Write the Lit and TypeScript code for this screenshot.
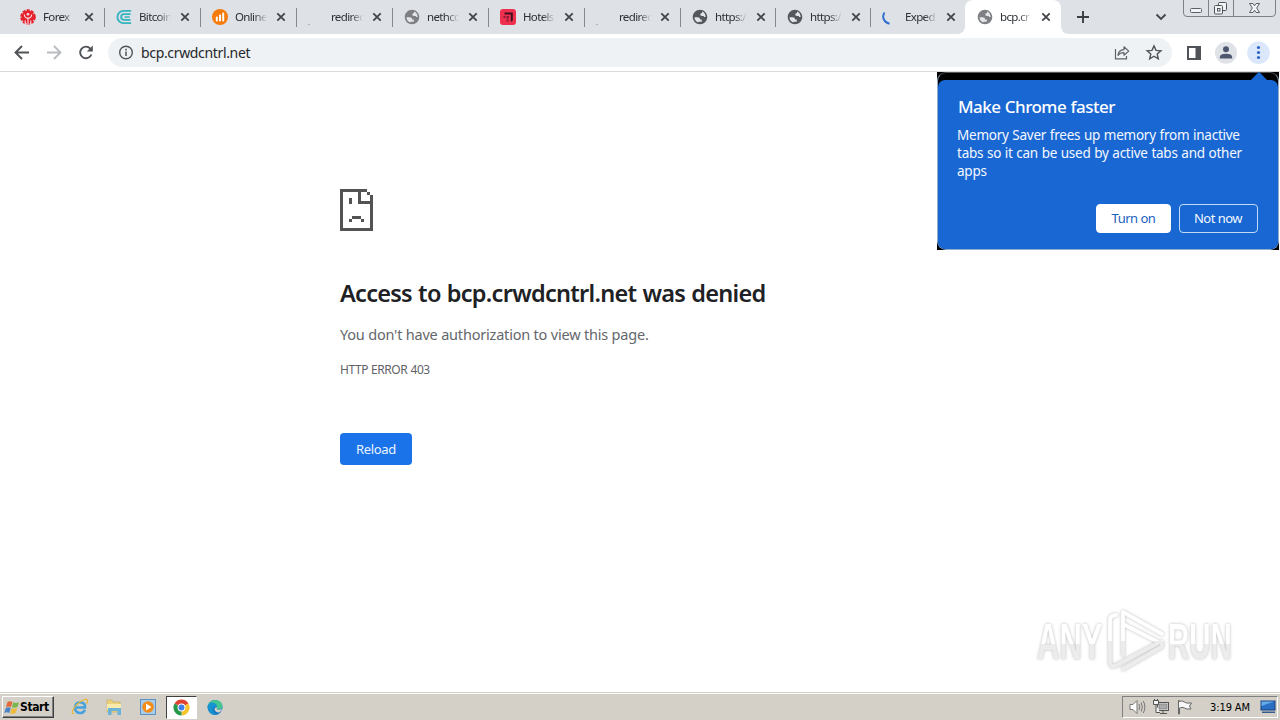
import { LitElement, html, css, svg, TemplateResult } from "lit";
import { customElement, property } from "lit/decorators.js";
import { classMap } from "lit/directives/class-map.js";

const globe = (color: string) => html`<svg width="16" height="16" viewBox="1 1 22 22">
  <circle cx="12" cy="12" r="9.500" fill="#e3e5e9" />
  <path fill=${color} d="M12 2C6.480 2 2 6.480 2 12s4.480 10 10 10 10-4.480 10-10S17.520 2 12 2zM4.500 12.500H8.500C11 12.500 12 13.500 12 15.500H14.500V18.500H10V19.500C6.500 18.800 4.300 16 4.500 12.500zM14.800 4.600C17.800 5.800 19.800 8.700 19.700 12C18 12.300 17.500 12 17 10.500C14.500 10.800 13 10.500 12.500 9.500C12 7.500 13.500 7 14.800 6.600z" fill-rule="evenodd" />
</svg>`;

const icons: Record<string, () => TemplateResult> = {
  none: () => html`<svg width="16" height="16" viewBox="0 0 16 16"><circle cx="1" cy="15.500" r=".6" fill="#777b82" /></svg>`,
  globe: () => globe("#7d7f83"),
  globeDark: () => globe("#54575c"),
  forex: () => html`<svg width="16" height="16" viewBox="0 0 16 16">
    <circle cx="8" cy="8" r="6.500" fill="#e5232f" stroke="#e5232f" stroke-width="2.600" stroke-dasharray="3 1.080" />
    <path d="M8 16V8.500M4.300 5.500Q4.500 9 8 9.500Q11.500 9 11.700 5.500M5.200 15V11.500M10.800 15V11.500" fill="none" stroke="#f6dfe3" stroke-width="1.100" />
    <circle cx="8" cy="5.300" r="1.300" fill="#f6dfe3" />
  </svg>`,
  bitcoin: () => html`<svg width="17" height="16" viewBox="0 0 17 16">
    <g fill="none" stroke="#33b4bf" stroke-width="2">
      <path d="M16 1.500H8A6.500 6.500 0 0 0 8 14.500H16" />
      <path d="M15.500 5H8.500A3 3 0 0 0 8.500 11H15.500" />
      <path d="M9 8H14.500" stroke-width="1.600" />
    </g>
  </svg>`,
  online: () => html`<svg width="16" height="16" viewBox="0 0 16 16">
    <circle cx="8" cy="8" r="8" fill="#f57c0c" />
    <path d="M4.800 11.500V8.500M8 11.500V6.500M11.200 11.500V4.500" stroke="#fff" stroke-width="2" stroke-linecap="round" />
  </svg>`,
  hotels: () => html`<svg width="16" height="16" viewBox="0 0 16 16">
    <rect width="16" height="16" rx="3" fill="#ee2f4d" />
    <path d="M4.500 3.500H12.800V11.500L10.800 13V5.600H4.500z" fill="#3c1020" />
    <path d="M3.500 7H5.500V9H3.500zM6.500 7H9V9.500H6.500zM6.500 10.500H8.500V12.500H6.500z" fill="#8a1a34" />
  </svg>`,
  spinner: () => html`<svg width="16" height="16" viewBox="0 0 16 16"><path d="M2.500 3.500C-.5 8 2 13.500 7.500 14.800" fill="none" stroke="#2f6fd0" stroke-width="2" /></svg>`,
};

interface Tab { icon: string; title: string; width: number; active?: boolean; line?: boolean; }

const TABS: Tab[] = [
  { icon: "forex", title: "Forex", width: 96, line: true },
  { icon: "bitcoin", title: "Bitcoin", width: 96, line: true },
  { icon: "online", title: "Onlinel", width: 96, line: true },
  { icon: "none", title: "redirec", width: 96, line: true },
  { icon: "globe", title: "nethcd", width: 96, line: true },
  { icon: "hotels", title: "Hotels", width: 96, line: true },
  { icon: "none", title: "redirec", width: 96, line: true },
  { icon: "globeDark", title: "https:/", width: 95, line: true },
  { icon: "globeDark", title: "https:/", width: 95, line: true },
  { icon: "spinner", title: "Exped", width: 95 },
  { icon: "globe", title: "bcp.cr", width: 96, active: true },
];

@customElement("browser-tab")
class BrowserTab extends LitElement {
  @property({ attribute: false }) tab!: Tab;
  static styles = css`
    :host { display: block; flex: none; height: 34px; }
    .tab { position: relative; display: flex; align-items: center; height: 34px; padding-left: 12px; box-sizing: border-box; }
    .active { background: #fff; border-radius: 8px 8px 0 0; }
    .active::before, .active::after { content: ""; position: absolute; bottom: 0; width: 7px; height: 7px; }
    .active::before { left: -7px; background: radial-gradient(circle at 0 0, transparent 6.500px, #fff 7px); }
    .active::after { right: -7px; background: radial-gradient(circle at 100% 0, transparent 6.500px, #fff 7px); }
    .line::after { content: ""; position: absolute; right: -1px; top: 8px; width: 1px; height: 19px; background: #85888d; }
    .icon { width: 16px; height: 16px; display: flex; flex: none; }
    .title { width: 35px; margin-left: 7px; overflow: hidden; white-space: nowrap; flex: none;
      font: 11.500px/16px "Noto Sans", sans-serif; letter-spacing: -0.65px; color: #2c2f34;
      -webkit-mask-image: linear-gradient(90deg, #000 55%, transparent 92%); mask-image: linear-gradient(90deg, #000 55%, transparent 92%); }
    .close { margin-left: 6px; flex: none; }
  `;
  render() {
    const t = this.tab;
    return html`<div class=${classMap({ tab: true, active: !!t.active, line: !!t.line })} style="width:${t.width}px">
      <span class="icon">${icons[t.icon]()}</span>
      <span class="title">${t.title}</span>
      <svg class="close" width="10" height="10" viewBox="0 0 10 10"><path d="M1.300 1.300L8.700 8.700M8.700 1.300L1.300 8.700" stroke="#42454a" stroke-width="1.800" /></svg>
    </div>`;
  }
}

@customElement("tab-strip")
class TabStrip extends LitElement {
  static styles = css`
    :host { display: flex; height: 34px; background: #dee1e6; padding-left: 8px; }
    .plus { margin: 11px 0 0 16px; flex: none; }
    .chev { margin: 13px 16px 0 auto; flex: none; }
    .win { flex: none; margin-right: 3px; }
  `;
  render() {
    return html`${TABS.map((t) => html`<browser-tab .tab=${t}></browser-tab>`)}
      <svg class="plus" width="12" height="12" viewBox="0 0 12 12"><path d="M6 0V12M0 6H12" stroke="#3c4043" stroke-width="1.900" /></svg>
      <svg class="chev" width="12" height="8" viewBox="0 0 12 8"><path d="M1.500 1.500L6 6L10.500 1.500" fill="none" stroke="#45484d" stroke-width="1.900" /></svg>
      <svg class="win" width="94" height="17" viewBox="0 0 94 17">
        <g fill="none" stroke="#7d828a">
          <path d="M.5 0V13Q.5 16.500 4 16.500H89Q92.500 16.500 92.500 13V0M25.500 0V16.500M50.500 0V16.500" />
          <rect x="7.500" y="8.500" width="11" height="4" rx="1" fill="#f2f3f5" stroke="#5d6066" />
          <g stroke="#50545a" fill="#f2f3f5"><rect x="35.500" y="2.500" width="8" height="8" rx="1" /><rect x="31.500" y="5.500" width="8" height="8.500" rx="1" /><rect x="34.500" y="8.500" width="2.500" height="2.500" /></g>
          <path d="M66.500 3.500H70L71.500 5.800L73 3.500H76.500L73.700 8L76.500 12.500H73L71.500 10.200L70 12.500H66.500L69.300 8z" fill="#f2f3f5" stroke="#5d6066" />
        </g>
      </svg>`;
  }
}

@customElement("tool-bar")
class ToolBar extends LitElement {
  static styles = css`
    :host { display: flex; align-items: center; height: 38px; box-sizing: border-box; background: #fff; border-bottom: 1px solid #d9dadc; padding-left: 12px; }
    .nav { flex: none; margin-right: 12px; }
    .box { display: flex; align-items: center; width: 1064px; height: 29px; box-sizing: border-box; border-radius: 14.500px; background: #eff2f5; padding: 0 9px 0 10px; }
    .url { flex: 1; margin-left: 7px; font: 14px/20px "Noto Sans", sans-serif; letter-spacing: -0.34px; color: #26282b; }
    .share { margin-right: 15px; }
    .side { margin-left: 14px; flex: none; }
    .avatar { margin-left: 13px; flex: none; }
    .menu { margin-left: 9px; flex: none; }
  `;
  render() {
    return html`
      <svg class="nav" width="20" height="20" viewBox="0 0 20 20"><path d="M17 9.500H4M10 3L3.500 9.500L10 16" fill="none" stroke="#505357" stroke-width="1.900" /></svg>
      <svg class="nav" width="20" height="20" viewBox="0 0 20 20"><path d="M3 9.500H16M10 3L16.500 9.500L10 16" fill="none" stroke="#b9bbbe" stroke-width="1.800" /></svg>
      <svg class="nav" width="20" height="20" viewBox="0 0 20 20"><path d="M15.400 11.500A5.800 5.800 0 1 1 14.300 5.600L15.800 7.100" fill="none" stroke="#505357" stroke-width="1.900" /><path d="M16.800 2.500V8.500H10.800z" fill="#505357" /></svg>
      <div class="box">
        <svg width="16" height="16" viewBox="0 0 16 16"><circle cx="8" cy="7.500" r="6.300" fill="none" stroke="#505357" stroke-width="1.400" /><path d="M8 6.500V11M8 3.800V5.400" stroke="#505357" stroke-width="1.500" /></svg>
        <span class="url">bcp.crwdcntrl.net</span>
        <svg class="share" width="16" height="16" viewBox="0 0 16 16"><g fill="none" stroke="#5f6368" stroke-width="1.200"><path d="M1.500 4V13.900H12.500V11" /><path d="M4 10.300Q4.500 5 10 4.700V1.800L14.700 6.100L10 10.200V7.600Q6 7.500 4 10.300z" stroke-linejoin="round" /></g></svg>
        <svg width="18" height="18" viewBox="0 0 18 18"><path d="M9 1.900L11 6.400L15.900 6.800L12.200 10L13.300 14.800L9 12.200L4.700 14.800L5.800 10L2.100 6.800L7 6.400z" fill="none" stroke="#505357" stroke-width="1.400" /></svg>
      </div>
      <svg class="side" width="16" height="16" viewBox="0 0 16 16"><path d="M1 1H15V15H1zM3 3V13H9.500V3z" fill="#505357" fill-rule="evenodd" /></svg>
      <svg class="avatar" width="22" height="22" viewBox="0 0 22 22"><circle cx="11" cy="10.800" r="11" fill="#dfe2e7" /><circle cx="11" cy="7.300" r="3" fill="#4d5870" /><path d="M4.800 16.500V15Q5.200 11.800 11 11.800Q16.800 11.800 17.200 15V16.500z" fill="#4d5870" /></svg>
      <svg class="menu" width="24" height="24" viewBox="0 0 24 24"><circle cx="12.500" cy="11.700" r="11.300" fill="#dbe7fb" /><g fill="#2a66c8"><circle cx="12.500" cy="6.500" r="1.600" /><circle cx="12.500" cy="11.500" r="1.600" /><circle cx="12.500" cy="16.500" r="1.600" /></g></svg>`;
  }
}

@customElement("memory-bubble")
class MemoryBubble extends LitElement {
  static styles = css`
    :host { display: block; width: 342px; height: 178px; background: #000; font-family: "Noto Sans", sans-serif; color: #f4f8ff; }
    .frame { box-sizing: border-box; height: 178px; border: 1px solid #8eaecb; border-top-color: #555; border-radius: 9px; padding-top: 7px; position: relative; }
    .tip { position: absolute; right: 10px; top: -1px; }
    .card { box-sizing: border-box; height: 169px; background: #1967d2; border-radius: 7px; padding: 15px 20px 0; }
    .title { font: 500 17px/24px "Noto Sans", sans-serif; letter-spacing: -0.55px; word-spacing: 0.6px; color: #fff; white-space: nowrap; }
    .text { margin-top: 7px; margin-left: -1px; font-size: 13.500px; line-height: 18px; letter-spacing: -0.24px; word-spacing: 0.4px; white-space: nowrap; }
    .actions { display: flex; justify-content: flex-end; gap: 8px; margin-top: 24px; }
    .btn { box-sizing: border-box; height: 29px; border-radius: 4px; font-size: 13px; line-height: 27px; text-align: center; border: 1px solid #fff; letter-spacing: -0.5px; }
    .on { width: 75px; background: #fff; color: #1a5fc0; }
    .off { width: 79px; border-color: #c2dcf8; padding-right: 1px; }
  `;
  render() {
    return html`<div class="frame">
      <svg class="tip" width="18" height="9" viewBox="0 0 18 9"><path d="M0 9L8 .8Q9 0 10 .8L18 9z" fill="#1967d2" /></svg>
      <div class="card">
        <div class="title">Make Chrome faster</div>
        <div class="text">Memory Saver frees up memory from inactive<br />tabs so it can be used by active tabs and other<br />apps</div>
        <div class="actions"><div class="btn on">Turn on</div><div class="btn off">Not now</div></div>
      </div>
    </div>`;
  }
}

@customElement("any-run-mark")
class AnyRunMark extends LitElement {
  static styles = css`
    :host { display: flex; align-items: center; height: 66px; filter: drop-shadow(0 0 1.500px rgba(0,0,0,.27)); }
    .word { display: inline-block; font: 700 50px/60px "Liberation Sans", sans-serif; color: transparent; background: linear-gradient(#fff 54%, #ececec 54%); -webkit-background-clip: text; background-clip: text; transform-origin: 0 50%; white-space: nowrap; }
    .any, .run { padding-top: 3px; }
    .any { width: 68px; }
    .any .word { transform: scaleX(.62); }
    .run { width: 66px; }
    .run .word { transform: scaleX(.59); }
    .play { flex: none; margin-right: 1px; }
  `;
  render() {
    return html`<div class="any"><span class="word">ANY</span></div>
      <svg class="play" width="62" height="66" viewBox="0 0 62 66">
        <defs><linearGradient id="g" gradientUnits="userSpaceOnUse" x1="0" x2="0" y1="0" y2="66"><stop offset=".52" stop-color="#fff" /><stop offset=".52" stop-color="#ececec" /></linearGradient></defs>
        <path d="M11 8Q5 8.500 5 13V55Q5.500 61 11 58.500L54 35.500L18 17M18 48V5L57 27M18 62L57 39.500V35" fill="none" stroke="url(#g)" stroke-width="3.800" stroke-linejoin="round" stroke-linecap="round" />
      </svg>
      <div class="run"><span class="word">RUN</span></div>`;
  }
}

@customElement("task-bar")
class TaskBar extends LitElement {
  static styles = css`
    :host { display: flex; align-items: center; box-sizing: border-box; height: 28px; background: #d4d0c8; border-top: 1px solid #d4d0c8; box-shadow: inset 0 1px #fff; padding: 1px 2px 0; font-family: "DejaVu Sans Condensed", "DejaVu Sans", sans-serif; color: #000; }
    .start { display: flex; align-items: center; box-sizing: border-box; width: 52px; height: 22px; padding-left: 1px; border: 1px solid; border-color: #fff #404040 #404040 #fff; box-shadow: inset -1px -1px #808080; font-size: 12px; font-weight: 700; letter-spacing: -0.4px; white-space: nowrap; }
    .flag { flex: none; margin-right: -1px; }
    .icon { flex: none; margin-left: 16px; }
    .ie { margin-left: 17px; }
    .pressed { display: flex; align-items: center; justify-content: center; box-sizing: border-box; width: 31px; height: 23px; margin: 0 9px 0 9px; background: #fff; border: 1px solid; border-color: #404040 #fff #fff #404040; }
    .edge { margin-left: 1px; }
    .tray { display: flex; align-items: center; box-sizing: border-box; width: 156px; height: 22px; margin-left: auto; padding-left: 6px; border: 1px solid; border-color: #808080 #fff #fff #808080; }
    .tray svg { flex: none; margin-right: 8px; }
    .tray .net { margin-right: 7px; margin-left: -1px; }
    .time { font-size: 11px; letter-spacing: -0.1px; margin-left: 9px; white-space: nowrap; width: 50px; }
    .tray .desk { margin: 0; }
  `;
  render() {
    const chromeArc = svg`<path d="M8 8L1.500 4.200A7.500 7.500 0 0 1 14.500 4.200z" fill="#e0402f" /><path d="M8 8L14.500 4.200A7.500 7.500 0 0 1 8 15.500z" fill="#f9c32b" /><path d="M8 8V15.500A7.500 7.500 0 0 1 1.500 4.200z" fill="#27984b" />`;
    return html`
      <div class="start"><svg class="flag" width="17" height="17" viewBox="0 0 17 17"><path d="M3.500 3Q6 1.500 8.500 3L7 8Q4.500 6.800 2 8z" fill="#e36a38" /><path d="M9.300 3.300Q12 4.600 15 3L13.500 8Q10.500 9.300 7.800 8.300z" fill="#79b64b" /><path d="M1.800 9Q4.400 7.700 6.800 9L5.300 14Q3 12.500.3 14z" fill="#4b83c7" /><path d="M7.600 9.300Q10.500 10.500 13.200 9L11.700 14Q9 15.500 6 14.300z" fill="#edbb3c" /></svg>Start</div>
      <svg class="icon ie" width="18" height="18" viewBox="0 0 18 18"><path d="M14 11.800Q12 15.300 8.700 15Q4 14.500 4 9.500Q4.500 4.300 9.500 4.300Q14.500 4.800 14 9.500H5" fill="none" stroke="#45a2dc" stroke-width="2.600" /><path d="M3 15.500C-1 17 2.500 8 8.500 4.200Q16-.5 16.500 2.500Q16.700 4 15.500 6" fill="none" stroke="#e6b93d" stroke-width="1.300" /></svg>
      <svg class="icon" width="18" height="18" viewBox="0 0 18 18"><path d="M2 2H7L8 4H15V14H2z" fill="#ecd27e" stroke="#c7a950" stroke-width=".6" /><path d="M2 6H16V12H2z" fill="#f8e9ad" /><path d="M3 10H16V17H12.500V13H6.500V17H3z" fill="#6bb3d8" /></svg>
      <svg class="icon" width="18" height="18" viewBox="0 0 18 18"><rect x="1.500" y="1.500" width="15" height="15" fill="#a9cce9" stroke="#5c91c2" /><circle cx="9" cy="9" r="5.800" fill="#f38b19" /><path d="M7 5.500L12.500 9L7 12.500z" fill="#fff" /></svg>
      <div class="pressed"><svg width="17" height="17" viewBox="0 0 16 16">${chromeArc}<circle cx="8" cy="8" r="3.700" fill="#fff" /><circle cx="8" cy="8" r="2.800" fill="#3f7ee8" /></svg></div>
      <svg class="edge" width="16" height="17" viewBox="0 0 16 17"><circle cx="8" cy="8.500" r="7.500" fill="#1778c4" /><path d="M.6 7.500Q2 .8 8.500 1Q15.500 1.800 15.500 7.500Q15 11 10.500 10.500Q9 10 10 8.300Q9.500 5 5.500 5Q2 5.300.6 7.500z" fill="#45c590" /><path d="M.6 7.500Q2 3 6 3.500Q10.500 5 10 8Q7 6.500 5.500 10Q5.500 14.500 10.500 15.500Q2 17 .6 7.500z" fill="#1594cf" /><path d="M10 8.300Q9 10 10.500 10.600Q13 11 15 10Q14.500 13 12 13.400Q8 13.500 7.500 10Q8 8 10 8.300z" fill="#d4d0c8" /></svg>
      <div class="tray">
        <svg width="17" height="16" viewBox="0 0 17 16"><g fill="none" stroke="#777"><path d="M1 5.500H4L8 1.500V14.500L4 10.500H1z" fill="#fff" /><path d="M10 5Q11.500 8 10 11M12.200 3.500Q14.500 8 12.200 12.500M14.300 2Q17.500 8 14.300 14" /></g></svg>
        <svg class="net" width="16" height="16" viewBox="0 0 16 16"><g fill="#f4f4f4" stroke="#555"><rect x="4.500" y="3.500" width="11" height="8" /><rect x="6" y="5" width="8" height="5" fill="#aaa" stroke="#888" /><path d="M7 14.500H14M10 11.500V14.500" /><path d="M.5 1.500H5.500V5.500H.5zM3 5.500V13.500H7M1.500 0V2M4.500 0V2" /></g></svg>
        <svg width="17" height="16" viewBox="0 0 17 16"><path d="M2.500 15V1.500H3.500V2.500Q6 1 8.500 3Q9 4.500 15.500 4L13.500 7L15 10Q10 10.500 8.500 9Q6 7.500 3.500 9V15z" fill="#f7f7f7" stroke="#666" /></svg>
        <span class="time">3:19 AM</span>
        <svg class="desk" width="16" height="14" viewBox="0 0 16 14"><rect x="1" y="1" width="14" height="9" fill="#2a6fc4" stroke="#163e7c" /><path d="M1.500 1.500H14L1.500 6z" fill="#64a9e8" /><path d="M2 11.500H15V13H2z" fill="#355c8d" /></svg>
      </div>`;
  }
}

@customElement("app-root")
class AppRoot extends LitElement {
  static styles = css`
    :host { display: flex; flex-direction: column; width: 1280px; height: 720px; background: #fff; position: relative; overflow: hidden; font-family: "Noto Sans", sans-serif; }
    .page { flex: 1; padding: 117px 0 0 340px; }
    .face { display: block; }
    .title { margin-top: 46px; font-size: 23.500px; line-height: 33px; font-weight: 600; color: #202124; letter-spacing: -0.72px; word-spacing: 0.7px; white-space: nowrap; }
    .msg { margin-top: 13px; font-size: 14.500px; line-height: 22px; color: #64676b; letter-spacing: -0.2px; white-space: nowrap; }
    .code { margin-top: 16px; font-size: 12px; line-height: 18px; color: #5f6368; letter-spacing: -0.45px; word-spacing: 0.5px; white-space: nowrap; }
    .reload { margin-top: 54px; width: 72px; height: 32px; border-radius: 4px; background: #1a73e8; color: #eaf3ff; font-size: 13px; line-height: 32px; text-align: center; letter-spacing: -0.3px; }
    memory-bubble { position: absolute; left: 937px; top: 72px; }
    any-run-mark { position: absolute; left: 1037px; top: 607px; }
  `;
  render() {
    return html`<tab-strip></tab-strip><tool-bar></tool-bar>
      <div class="page">
        <svg class="face" width="33" height="42" viewBox="0 0 11 14" shape-rendering="crispEdges"><path d="M0 0H9V1H10V2H11V14H0zM1 1V13H10V5H6V1zM7 1V4H10V2H9V1zM3 3H4V5H3zM4 9H7V10H4zM3 10H4V11H3zM7 10H8V11H7z" fill="#535353" fill-rule="evenodd" /></svg>
        <div class="title">Access to bcp.crwdcntrl.net was denied</div>
        <div class="msg">You don't have authorization to view this page.</div>
        <div class="code">HTTP ERROR 403</div>
        <div class="reload">Reload</div>
      </div>
      <task-bar></task-bar>
      <memory-bubble></memory-bubble>
      <any-run-mark></any-run-mark>`;
  }
}
